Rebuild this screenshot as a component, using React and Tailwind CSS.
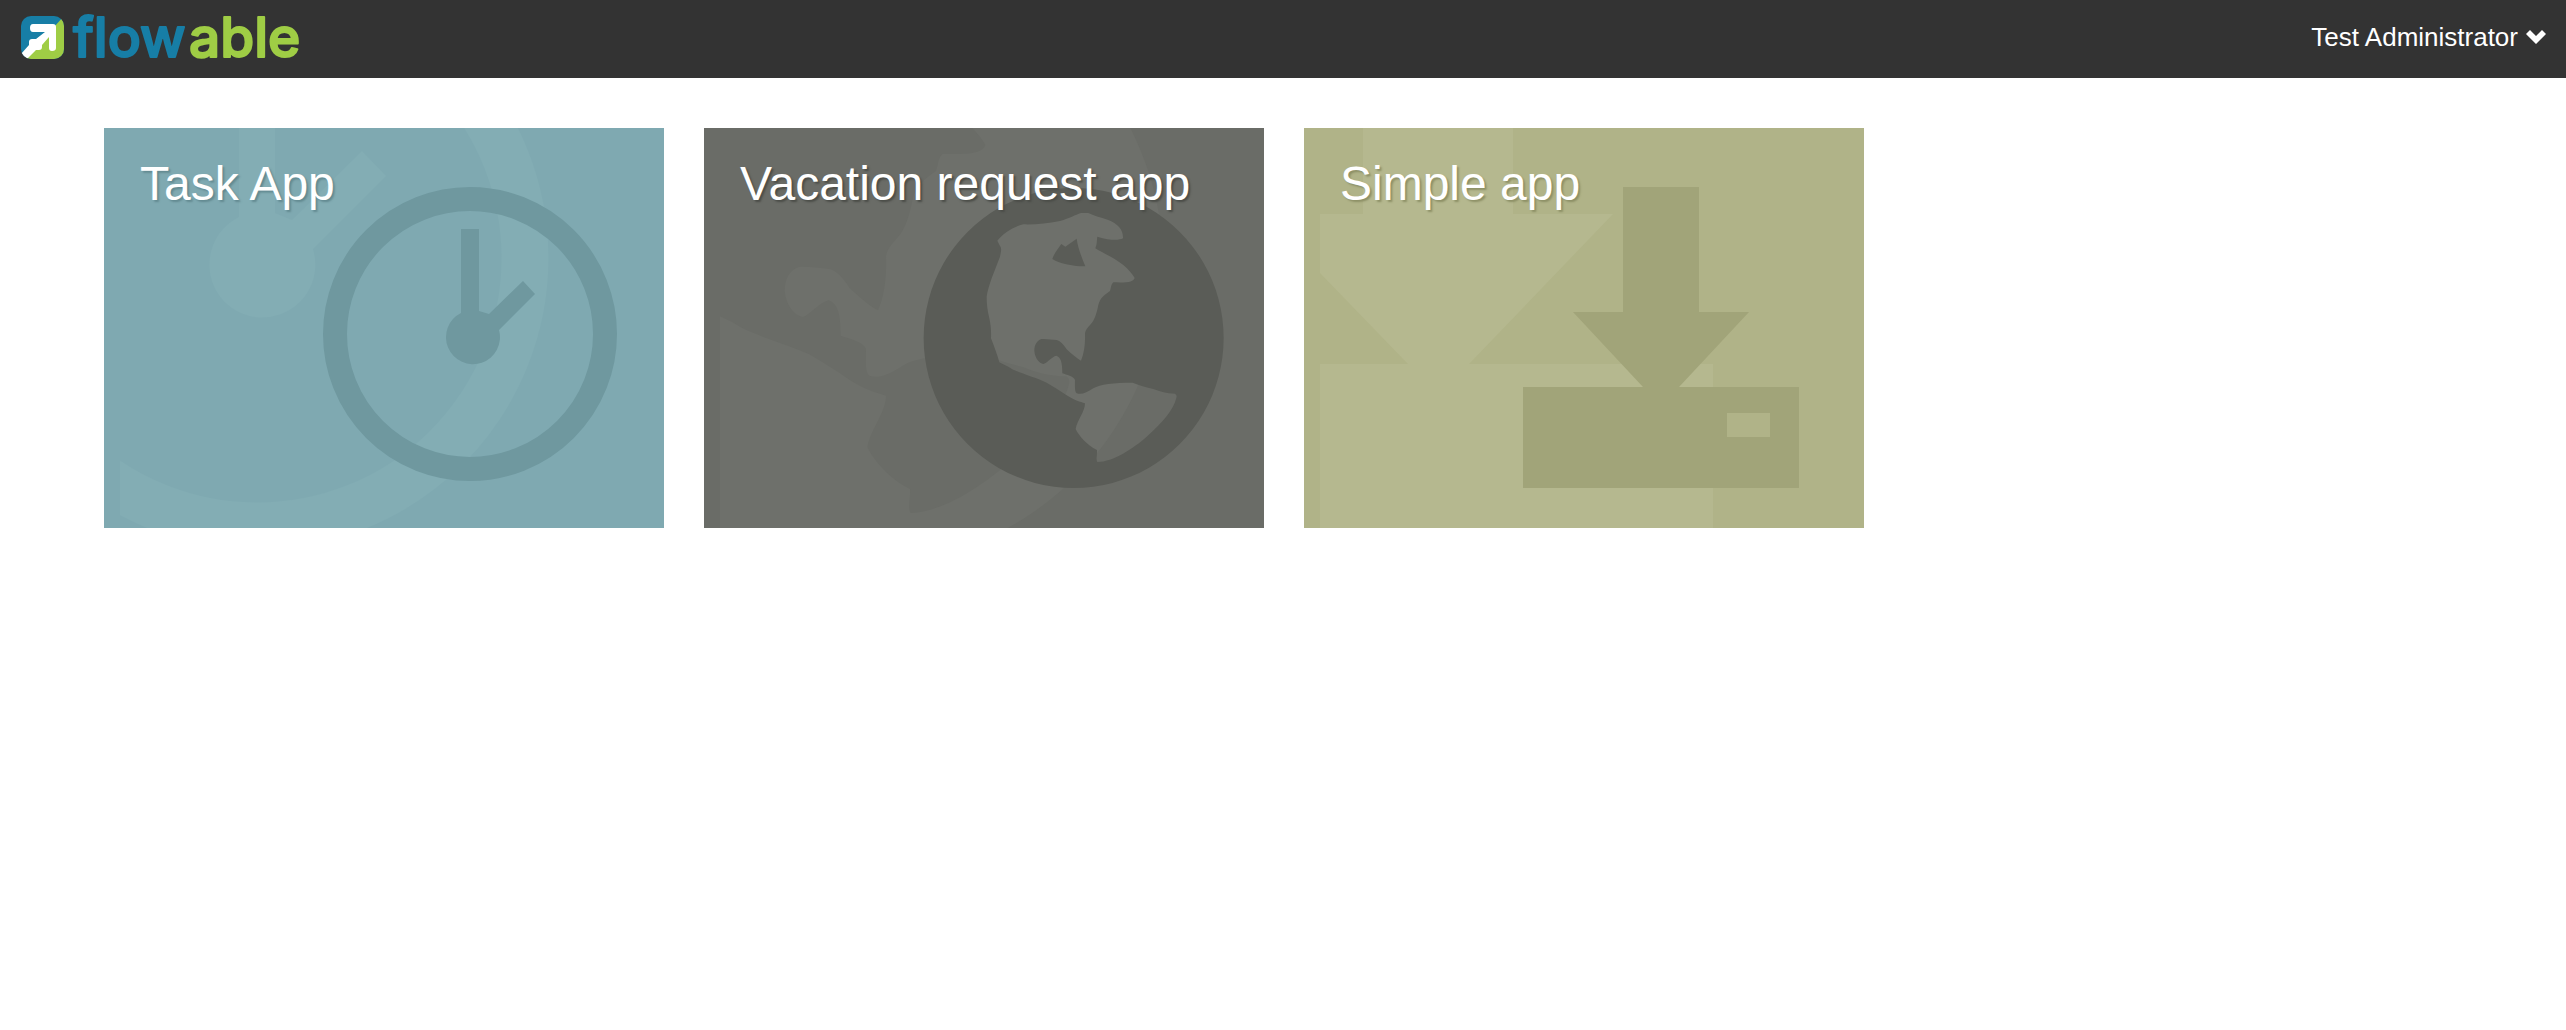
const GLOBE =
  "M521 54A450 450 0 1 1 520.9 54Z" +
  "M292 212C310 188 345 168 370 163C410 164 440 160 480 153C510 144 525 135 543 129L565 129C580 136 600 142 625 150C655 162 670 180 669 205C655 212 630 211 592 200C590 210 592 220 586 235C610 250 640 262 670 285C685 298 698 312 704 324C700 335 685 339 640 337C632 345 634 352 630 363C610 377 600 385 595 405C590 430 585 445 577 457C567 470 556 478 555 492C556 520 553 550 543 572C530 565 515 552 500 538C490 522 480 512 470 510C455 509 440 506 424 507C410 512 403 525 403 543C405 565 418 580 430 582C440 580 455 560 469 557C482 562 487 575 487 610C500 615 520 618 525 630C525 645 523 665 530 670C545 675 560 668 580 655C600 643 640 638 698 638C715 645 740 652 760 657C780 665 800 671 825 671Q832 675 829 684C820 720 790 755 740 800C700 835 640 875 592 876C587 868 592 855 591 840C560 825 535 795 527 777C532 750 555 725 555 700C540 695 525 692 500 676C480 662 460 650 440 638C400 620 350 608 325 590L298 577C292 555 283 530 273 505C274 480 272 465 268 445C262 420 260 400 260 380C265 345 285 300 300 260C304 240 305 235 300 228Z" +
  "M484 222L496 230L530 206C534 235 545 262 556 289C530 290 480 282 457 267C462 250 475 235 484 222Z";

function Art({ children }) {
  return (
    <svg
      viewBox="0 0 560 400"
      className="absolute inset-0 h-full w-full"
      aria-hidden="true"
    >
      {children}
    </svg>
  );
}

function ClockArt() {
  return (
    <Art>
      <svg x="16" y="0" width="544" height="400" viewBox="16 0 544 400">
        <g fill="#83adb4">
          <circle cx="153" cy="130" r="268" fill="none" stroke="#83adb4" strokeWidth="47" />
          <path d="M135 0H171V85L188 92L258 23L282 48L209 121A53 53 0 1 1 135 89Z" />
        </g>
      </svg>
      <g fill="#6f989f">
        <circle cx="366" cy="206" r="135" fill="none" stroke="#6f989f" strokeWidth="24" />
        <path d="M357 101H375V183L385 186L419 153L431 166L395 202A27 27 0 1 1 357 185Z" />
      </g>
    </Art>
  );
}

function GlobeArt() {
  return (
    <Art>
      <svg x="16" y="0" width="544" height="400" viewBox="16 0 544 400">
        <path
          d={GLOBE}
          fill="#6e706b"
          fillRule="evenodd"
          transform="translate(-188 -199) scale(0.66667)"
        />
      </svg>
      <path
        d={GLOBE}
        fill="#5a5c57"
        fillRule="evenodd"
        transform="translate(196 42) scale(0.33333)"
      />
    </Art>
  );
}

function DownloadArt() {
  return (
    <Art>
      <path
        fill="#b5b88f"
        d="M59 0H209V86H309L165 236H409V400H16V236H104L16 145V86H59Z"
      />
      <path
        fill="#a1a479"
        fillRule="evenodd"
        d="M319 59H395V184H445L375 259H495V360H219V259H339L269 184H319ZM423 285V309H466V285Z"
      />
    </Art>
  );
}

const APPS = [
  { name: "Task App", color: "bg-[#7fa9b1]", shadow: "[text-shadow:2px_2px_2px_#638a91]", Picture: ClockArt },
  { name: "Vacation request app", color: "bg-[#6a6c67]", shadow: "[text-shadow:2px_2px_2px_#4b4d48]", Picture: GlobeArt },
  { name: "Simple app", color: "bg-[#b0b388]", shadow: "[text-shadow:2px_2px_2px_#8d9066]", Picture: DownloadArt },
];

function Logo() {
  return (
    <svg viewBox="0 0 300 78" className="h-[78px] w-[300px]" role="img" aria-label="flowable">
      <defs>
        <clipPath id="mark">
          <rect x="1" y="16" width="43" height="43" rx="10" />
        </clipPath>
      </defs>
      <g clipPath="url(#mark)">
        <rect x="1" y="16" width="43" height="43" fill="#177ea6" />
        <path d="M44 16L5 59H44Z" fill="#9fcd45" />
        <path
          d="M13 24H33Q36 24 36 27V48Q36 51 32 51Q29 51 29 48V37L22 45V47Q22 50 19 50H16L7 59L1 60V54L9 45V42Q9 39 12 39H16L25 32H13Q10 32 10 28Q10 24 13 24Z"
          fill="#fff"
        />
      </g>
      <text
        y="57"
        fontFamily="Inter, sans-serif"
        fontSize="55"
        fontWeight="500"
        strokeWidth="2"
        strokeLinejoin="round"
      >
        <tspan x="53" fill="#177ea6" stroke="#177ea6">flow</tspan>
        <tspan x="169" fill="#9fcd45" stroke="#9fcd45">able</tspan>
      </text>
    </svg>
  );
}

export default function App() {
  return (
    <div className="min-h-screen bg-white font-['Liberation_Sans',Arial,sans-serif] text-white">
      <header className="flex h-[78px] items-center justify-between bg-[#333] px-5">
        <a href="#home" className="flex items-center">
          <Logo />
        </a>
        <button type="button" className="flex items-center gap-2 pb-1 text-[26px] leading-8">
          Test Administrator
          <svg viewBox="0 0 20 14" className="h-[14px] w-5" aria-hidden="true">
            <path d="M4 0L10 6L16 0L20 4L10 14L0 4Z" fill="#fff" />
          </svg>
        </button>
      </header>
      <main className="flex flex-wrap gap-10 px-[104px] pt-[50px]">
        {APPS.map(({ name, color, shadow, Picture }) => (
          <a
            key={name}
            href="#app"
            className={`relative block h-[400px] w-[560px] overflow-hidden px-9 pt-7 ${color}`}
          >
            <Picture />
            <h2 className={`relative text-[48px] leading-[56px] ${shadow}`}>{name}</h2>
          </a>
        ))}
      </main>
    </div>
  );
}
